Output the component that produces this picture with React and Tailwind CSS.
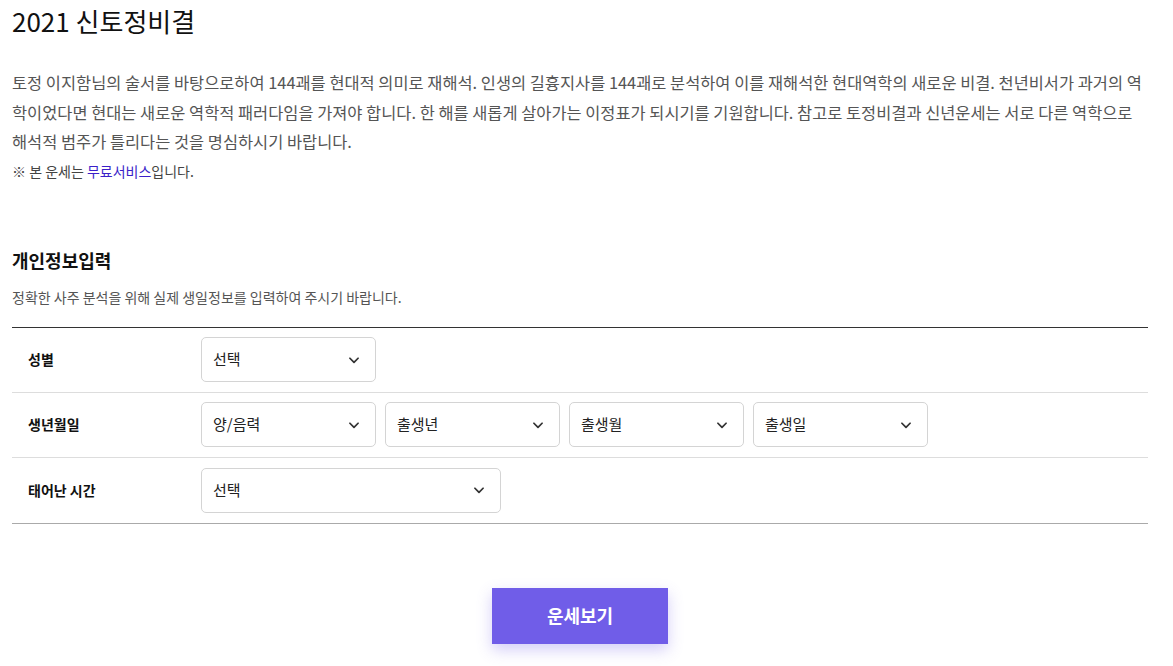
import React from "react";

function Chevron() {
  return (
    <svg width="14" height="14" viewBox="0 0 24 24" fill="none" stroke="#333" strokeWidth="3" strokeLinecap="round" strokeLinejoin="round">
      <path d="M5 9l7 7 7-7" />
    </svg>
  );
}

function Select({ label, w = "w-[175px]" }) {
  return (
    <div className={`${w} h-[45px] border border-[#d4d4d4] rounded-[5px] flex items-center justify-between pl-[11px] pr-[14px] bg-white`}>
      <span className="text-[15px] text-[#222]">{label}</span>
      <Chevron />
    </div>
  );
}

function Row({ label, children, last }) {
  return (
    <div className={`flex items-center h-[65px] ${last ? "" : "border-b border-[#dddddd]"}`}>
      <div className="w-[189px] pl-4 text-[14px] font-bold text-[#111]">{label}</div>
      <div className="flex gap-[9px]">{children}</div>
    </div>
  );
}

export default function App() {
  return (
    <div className="bg-white w-[1173px] h-[666px] overflow-hidden" style={{ fontFamily: '"Noto Sans CJK KR", "Noto Sans", sans-serif' }}>
      <div className="w-[1136px] ml-3">
        <h1 className="text-[26px] text-[#111] pt-[3px] leading-[36px] font-normal">2021 신토정비결</h1>
        <p className="mt-[29px] text-[16.42px] leading-[29.5px] text-[#555]">
          토정 이지함님의 술서를 바탕으로하여 144괘를 현대적 의미로 재해석. 인생의 길흉지사를 144괘로 분석하여 이를 재해석한 현대역학의 새로운 비결. 천년비서가 과거의 역학이었다면 현대는 새로운 역학적 패러다임을 가져야 합니다. 한 해를 새롭게 살아가는 이정표가 되시기를 기원합니다. 참고로 토정비결과 신년운세는 서로 다른 역학으로 해석적 범주가 틀리다는 것을 명심하시기 바랍니다.
        </p>
        <p className="mt-[3px] text-[14px] leading-[22px] text-[#444]">
          ※ 본 운세는 <span className="text-[#3b1fc9]">무료서비스</span>입니다.
        </p>

        <h2 className="mt-[65px] text-[18px] font-bold text-[#111] leading-[26px]">개인정보입력</h2>
        <p className="mt-[14px] text-[14px] text-[#555] leading-[20px]">정확한 사주 분석을 위해 실제 생일정보를 입력하여 주시기 바랍니다.</p>

        <div className="mt-[20px] border-t border-[#333] border-b border-b-[#aaaaaa]">
          <Row label="성별">
            <Select label="선택" />
          </Row>
          <Row label="생년월일">
            <Select label="양/음력" />
            <Select label="출생년" />
            <Select label="출생월" />
            <Select label="출생일" />
          </Row>
          <Row label="태어난 시간" last>
            <Select label="선택" w="w-[300px]" />
          </Row>
        </div>

        <div className="flex justify-center mt-[64px]">
          <button className="w-[176px] h-[56px] bg-[#705de8] text-white text-[18px] font-bold shadow-[0_6px_14px_rgba(112,93,232,0.3)]">
            운세보기
          </button>
        </div>
      </div>
    </div>
  );
}
